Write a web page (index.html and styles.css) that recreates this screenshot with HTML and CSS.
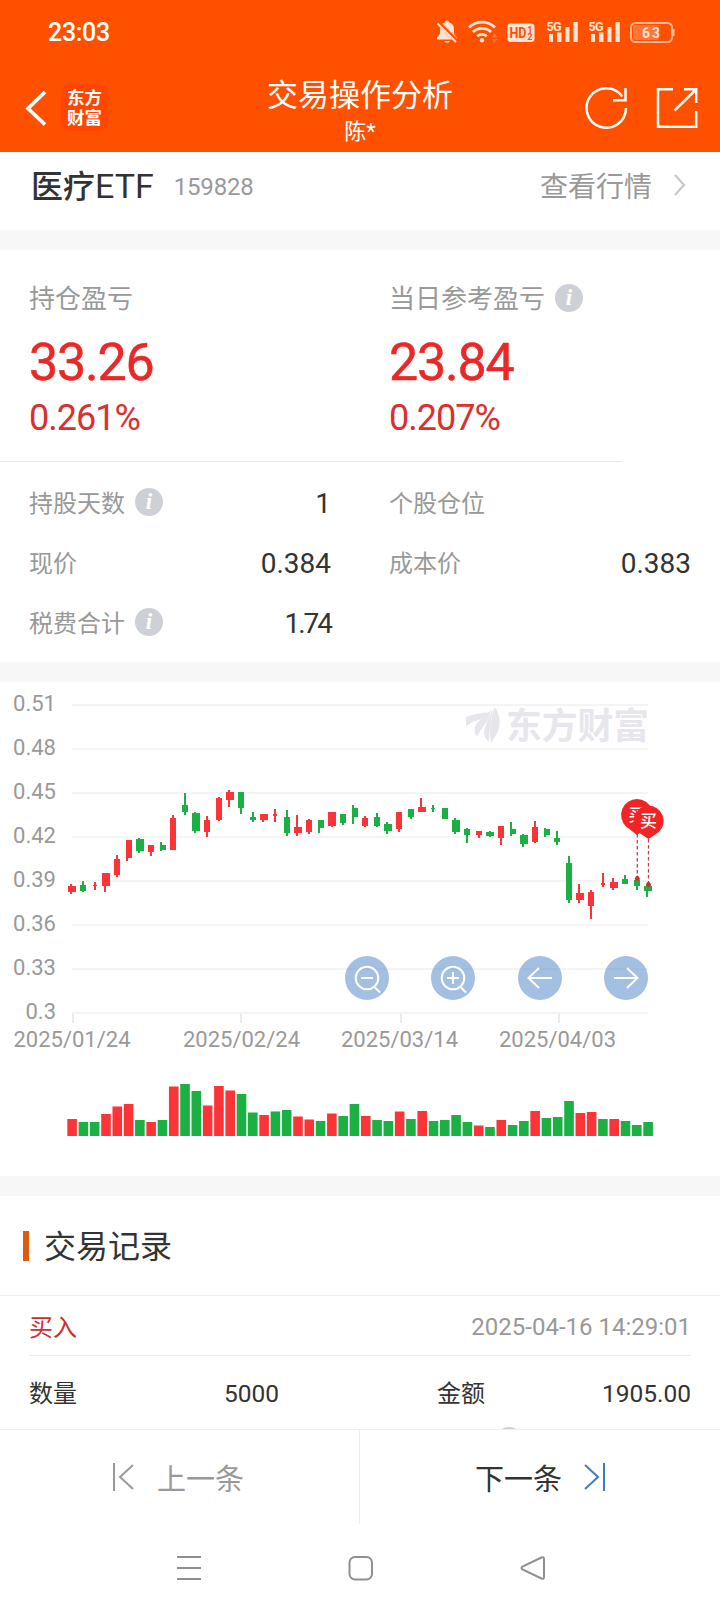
FILE: index.html
```html
<!DOCTYPE html>
<html lang="zh-CN">
    <head>
        <meta charset="UTF-8">
        <meta name="viewport" content="width=device-width, initial-scale=1.0">
        <title>交易操作分析</title>
        <link rel="stylesheet" href="styles.css">
    </head>
    <body>
        <header class="header">
            <div class="status-bar">
                <span class="time">23:03</span>
                <svg class="status-icons" width="244" height="30" viewBox="434 16 244 30" fill="#ffe3d3">
                    <!-- muted bell -->
                    <path d="M447 20.5c1.2 0 1.8.8 1.8 1.7 3.6 1 5.2 3.6 5.2 7v4.6l3 4.2v1.5H437V38l3-4.2v-4.6c0-3.4 1.6-6 5.2-7 0-.9.6-1.7 1.8-1.7zM444 41h6c-.4 2.4-5.6 2.4-6 0z"/>
                    <path d="M438 22.5L457.5 42" stroke="#ff5000" stroke-width="4.5"/>
                    <path d="M437.5 23.5L456 42" stroke="#ffe3d3" stroke-width="2"/>
                    <!-- wifi -->
                    <g fill="none" stroke="#ffe3d3" stroke-width="2.8">
                        <path d="M469 27.5a18.5 18.5 0 0 1 26 0"/>
                        <path d="M473 32a12.8 12.8 0 0 1 18 0"/>
                        <path d="M477.3 36.3a6.8 6.800 0 0 1 9.4 0"/>
                    </g>
                    <circle cx="482" cy="40.2" r="2.2"/>
                    <path d="M491.5 37.5l3-4 3 4zM491.500 39l3 4 3-4z" fill="#ff7434"/>
                    <!-- HD badge -->
                    <rect x="507.5" y="23.5" width="27" height="18.5" rx="3.5"/>
                    <g class="badge-text" fill="#ff5000">
                        <text x="509.5" y="38.2" font-size="15" textLength="17" lengthAdjust="spacingAndGlyphs">HD</text>
                        <text x="527.2" y="32.5" font-size="9">1</text>
                        <text x="527.2" y="40" font-size="9">2</text>
                    </g>
                    <!-- signals -->
                    <g class="badge-text">
                        <text x="546.5" y="30.5" font-size="12.5" textLength="15">5G</text>
                        <text x="588.5" y="30.5" font-size="12.5" textLength="15">5G</text>
                    </g>
                    <path d="M549 34h4v8h-4zM557 32.5h4.5V42H557zM565.5 27h4v15h-4zM573.5 22h4.3v20h-4.3z"/>
                    <path d="M591 34h4v8h-4zM599 32.5h4.5V42H599zM607.5 27h4v15h-4zM615.5 22h4.3v20h-4.3z"/>
                    <!-- battery -->
                    <rect x="631" y="23" width="41" height="19" rx="4.5" fill="none" stroke="#ffb999" stroke-width="2"/>
                    <rect x="633" y="25" width="26" height="15" rx="2" fill="#ff7437"/>
                    <path d="M673.500 29v7" stroke="#ffb999" stroke-width="2"/>
                    <text class="badge-text" x="651" y="37.5" font-size="14" text-anchor="middle" textLength="18">63</text>
                </svg>
            </div>
            <div class="title-bar">
                <div class="title-left">
                    <svg width="24" height="40" viewBox="24 88 24 40" fill="none" stroke="#fff" stroke-width="3.7">
                        <path d="M45 92L28 108.5 45 124.5"/>
                    </svg>
                    <div class="app-logo">东方<br>财富</div>
                </div>
                <div class="title-center">
                    <h1>交易操作分析</h1>
                    <p>陈*</p>
                </div>
                <svg width="116" height="44" viewBox="584 86 116 44" fill="none" stroke="#fff" stroke-width="2.5">
                    <path d="M626 108a19.7 19.7 0 1 1-3.7-11.5"/>
                    <path d="M625.5 88v12.3H613"/>
                    <path d="M673 89.3H658v37.5h38.2V111M684 89.3h12.2V103M674.5 110.5L696 89.5"/>
                </svg>
            </div>
        </header>

        <section class="stock">
            <h2>医疗<span>ETF</span></h2>
            <span class="code">159828</span>
            <a class="quote-link">查看行情</a>
            <svg width="14" height="24" viewBox="0 0 14 24" fill="none" stroke="#c8c8c8" stroke-width="2.2">
                <path d="M2 2l9 10-9 10"/>
            </svg>
        </section>

        <section class="summary">
            <div class="profit">
                <div class="profit-item">
                    <div class="label"><span>持仓盈亏</span></div>
                    <div class="amount">33.26</div>
                    <div class="percent">0.261%</div>
                </div>
                <div class="profit-item">
                    <div class="label"><span>当日参考盈亏</span><i class="info">i</i></div>
                    <div class="amount">23.84</div>
                    <div class="percent">0.207%</div>
                </div>
            </div>
            <div class="details">
                <div class="detail"><span class="name">持股天数</span><i class="info">i</i><b>1</b></div>
                <div class="detail"><span class="name">个股仓位</span></div>
                <div class="detail"><span class="name">现价</span><b>0.384</b></div>
                <div class="detail"><span class="name">成本价</span><b>0.383</b></div>
                <div class="detail"><span class="name">税费合计</span><i class="info">i</i><b class="narrow">1.74</b></div>
            </div>
        </section>

        <section class="chart">
            <svg id="chart" width="720" height="494" viewBox="0 682 720 494">
                <g id="axis"></g>
                <g fill="#e6e6ec">
                    <path d="M466 717c8-3 17-5 24-4.5-4 5-12 8-16 8.5-3 1.5-5 3.5-8 5z"/>
                    <path d="M475 727c3-6 8-10 16-17-2 7-3 10-6 14-3 4-6 8-8 13-2-4-3-7-2-10z"/>
                    <path d="M493 708c-4 10-8 17-9 24 0 5 3 8 5 10 0-12 2-22 4-34z"/>
                    <path d="M494.5 707c6 8 7 18 2 27l-5 9c-3-7-2-20 3-36z"/>
                    <text class="watermark" x="506" y="739" textLength="143" lengthAdjust="spacingAndGlyphs">东方财富</text>
                </g>
                <g id="candles" shape-rendering="crispEdges"></g>
                <g id="volumes"></g>
                <!-- buy markers -->
                <g stroke="#b8474a" stroke-width="1.300" stroke-dasharray="3.5 2.5">
                    <path d="M637.3 834v43M648.5 839v44"/>
                </g>
                <g fill="#d32a2a">
                    <path d="M634.5 879q2.8-7 5.6 0-2.8 4-5.6 0zM645.7 885q2.8-7 5.6 0-2.8 4-5.6 0z"/>
                </g>
                <path d="M637 799a16 16 0 0 1 11 27.5L637 835l-11-8.5A16 16 0 0 1 637 799z" fill="#f02424"/>
                <text class="pin" x="637" y="820.5">买</text>
                <path d="M648.5 805.5a15.5 15.5 0 0 1 10.5 26.5l-10.5 7-10.5-7a15.5 15.5 0 0 1 10.5-26.5z" fill="#f02424"/>
                <text class="pin" x="648.5" y="826.5">买</text>
            </svg>
            <div class="chart-tools">
                <button><svg viewBox="0 0 44 44"><circle cx="22" cy="22" r="11.3"/><path d="M16 22h12M29.500 31l5.500 5.500"/></svg></button>
                <button><svg viewBox="0 0 44 44"><circle cx="22" cy="22" r="11.3"/><path d="M16 22h12M22 16v12M29.500 31l5.500 5.500"/></svg></button>
                <button><svg viewBox="0 0 44 44"><path d="M34 22H10.5M21 12L10.5 22 21 32"/></svg></button>
                <button><svg viewBox="0 0 44 44"><path d="M10 22h23.5M23 12l10.5 10L23 32"/></svg></button>
            </div>
        </section>

        <section class="records">
            <h3><span>交易记录</span></h3>
            <div class="record-head">
                <span class="buy">买入</span>
                <time>2025-04-16 14:29:01</time>
            </div>
            <div class="record-body">
                <span>数量</span>
                <span class="num">5000</span>
                <span>金额</span>
                <span class="num">1905.00</span>
                <i class="info more"></i>
            </div>
        </section>

        <nav class="pager">
            <div class="prev">
                <svg width="22" height="30" viewBox="0 0 22 30" fill="none" stroke="#999" stroke-width="2"><path d="M2 1v28M21 3L8 15l13 12"/></svg>
                <span>上一条</span>
            </div>
            <div class="next">
                <span>下一条</span>
                <svg width="22" height="30" viewBox="0 0 22 30" fill="none" stroke="#3c7ec4" stroke-width="2"><path d="M20 1v28M1 3l13 12L1 27"/></svg>
            </div>
        </nav>

        <div class="system-nav">
            <svg width="26" height="26" viewBox="0 0 26 26"><path d="M1 2h24M1 13h24M1 24h24"/></svg>
            <svg width="26" height="26" viewBox="0 0 26 26"><rect x="1.5" y="2" width="22.5" height="22.5" rx="5.5"/></svg>
            <svg width="26" height="26" viewBox="0 0 26 26"><path d="M21.500 2.5L2.5 11.500q-2 1.500 0 3l19 9q2.500 1 2.500-1.500V4q0-2.500-2.500-1.500z"/></svg>
        </div>

        <script src="script.js"></script>
    </body>
</html>
```

FILE: styles.css
```css
:root {
    --orange: #ff5000;
    --red: #ea2828;
    --dark: #333;
    --gray: #999;
    --line: #ededed;
    --gap: #f7f7f7;
}

* {
    margin: 0;
    padding: 0;
    box-sizing: border-box;
}

body {
    width: 720px;
    height: 1612px;
    overflow: hidden;
    background: #fff;
    color: var(--dark);
    font-family: Roboto, 'Noto Sans CJK SC', sans-serif;
}

svg {
    display: block;
    flex-shrink: 0;
}

/* header */
.header {
    height: 152px;
    background: var(--orange);
    color: #fff;
}

.status-bar {
    display: flex;
    justify-content: space-between;
    height: 64px;
    padding: 16px 42px 0 48px;
}

.time {
    font-size: 25px;
    font-weight: 500;
    line-height: 33px;
    letter-spacing: -0.3px;
}

.badge-text {
    font-family: Roboto, sans-serif;
    font-weight: 700;
}

.title-bar {
    display: grid;
    grid-template-columns: 1fr auto 1fr;
    height: 88px;
    padding: 0 20px 0 24px;
}

.title-bar > svg {
    justify-self: end;
    margin-top: 22px;
}

.title-left {
    display: flex;
    align-items: center;
    gap: 13px;
    height: 88px;
}

.app-logo {
    width: 47px;
    height: 47px;
    margin-top: -1px;
    padding-top: 4px;
    border-radius: 9px;
    background: #ff4500;
    font-size: 17.5px;
    font-weight: 700;
    line-height: 20px;
    text-align: center;
}

.title-center {
    margin-left: -4px;
    text-align: center;
}

.title-center h1 {
    margin-top: 10px;
    font-size: 31px;
    font-weight: 400;
    line-height: 44px;
}

.title-center p {
    font-size: 22px;
    line-height: 27px;
}

/* stock */
.stock {
    display: flex;
    align-items: center;
    height: 98px;
    padding: 0 33px 12px 31px;
    border-bottom: 20px solid var(--gap);
}

.stock h2 {
    margin-top: -2px;
    font-size: 32px;
    font-weight: 500;
}

.stock h2 span {
    font-size: 34px;
    font-weight: 400;
}

.code {
    margin: 4px 0 0 20px;
    color: var(--gray);
    font-size: 24px;
    letter-spacing: -0.2px;
}

.quote-link {
    margin: 0 21px 0 auto;
    color: var(--gray);
    font-size: 28px;
}

/* summary */
.summary {
    height: 432px;
    border-bottom: 20px solid var(--gap);
}

.profit {
    display: grid;
    grid-template-columns: 360px 1fr;
    height: 211px;
    padding: 30px 0 0 29px;
}

.label {
    display: flex;
    align-items: center;
    height: 36px;
    color: var(--gray);
    font-size: 26px;
}

.label span,
.name {
    padding-bottom: 3px;
}

.info {
    display: block;
    width: 28px;
    height: 28px;
    border-radius: 50%;
    background: #cdd0d6;
    color: #fff;
    font: italic 700 23px/27px 'Liberation Serif', serif;
    text-align: center;
}

.label .info {
    margin-left: 10px;
}

.amount {
    height: 58px;
    margin-top: 18px;
    color: var(--red);
    font-size: 52px;
    line-height: 58px;
    letter-spacing: -1.2px;
    -webkit-text-stroke: 0.5px var(--red);
}

.percent {
    margin-top: 4px;
    color: #d93030;
    font-size: 36px;
    line-height: 44px;
    letter-spacing: -1px;
}

.details {
    position: relative;
    display: grid;
    grid-template-columns: 302px 302px;
    grid-auto-rows: 60px;
    column-gap: 58px;
    padding: 12px 0 0 29px;
}

.details::before {
    content: '';
    position: absolute;
    top: 0;
    left: 0;
    width: 622px;
    height: 1px;
    background: #e8e8e8;
}

.detail {
    display: flex;
    align-items: center;
}

.name {
    color: var(--gray);
    font-size: 24px;
}

.detail .info {
    margin: -2px 0 0 10px;
}

.detail b {
    margin-left: auto;
    font-size: 28px;
    font-weight: 400;
}

.detail .narrow {
    letter-spacing: -2px;
}

/* chart */
.chart {
    position: relative;
    height: 514px;
    border-bottom: 20px solid var(--gap);
}

.chart text {
    font-family: Roboto, 'Noto Sans CJK SC', sans-serif;
}

.axis-label {
    fill: var(--gray);
    font-size: 22px;
}

.watermark {
    font-size: 36px;
    font-weight: 700;
}

.pin {
    fill: #fff;
    font-size: 17px;
    font-weight: 500;
    text-anchor: middle;
}

.chart-tools {
    position: absolute;
    top: 274px;
    left: 345px;
    display: flex;
    gap: 42.3px;
}

.chart-tools button {
    width: 44px;
    height: 44px;
    border: none;
    border-radius: 50%;
    background: rgba(72, 130, 200, 0.5);
}

.chart-tools svg {
    width: 44px;
    height: 44px;
    fill: none;
    stroke: #fff;
    stroke-width: 2;
}

/* records */
.records {
    height: 233px;
    overflow: hidden;
}

.records h3 {
    display: flex;
    align-items: center;
    height: 100px;
    padding: 0 0 0 23px;
    border-bottom: 1px solid var(--line);
    font-size: 32px;
    font-weight: 400;
}

.records h3::before {
    content: '';
    width: 6px;
    height: 30px;
    margin-right: 15px;
    background: #e05a0c;
}

.records h3 span {
    padding-bottom: 3px;
}

.record-head {
    display: flex;
    align-items: center;
    justify-content: space-between;
    height: 60px;
    margin: 0 29px;
    padding-top: 3px;
    border-bottom: 1px solid var(--line);
    font-size: 24px;
}

.buy {
    padding-bottom: 4px;
    color: #cc2f2f;
}

.record-head time {
    color: var(--gray);
}

.record-body {
    position: relative;
    display: grid;
    grid-template-columns: 195px 213px 1fr auto;
    align-items: center;
    height: 73px;
    margin: 0 29px;
    font-size: 24px;
}

.record-body span {
    padding-bottom: 2px;
}

.record-body .num {
    padding: 1px 0 0;
    font-size: 24.5px;
}

.more {
    position: absolute;
    top: 71px;
    left: 466px;
}

/* pager */
.pager {
    display: grid;
    grid-template-columns: 1fr 1fr;
    height: 95px;
    border-top: 1px solid var(--line);
    font-size: 29px;
}

.pager div {
    display: flex;
    align-items: center;
    height: 94px;
}

.prev {
    gap: 23px;
    padding-left: 112px;
    border-right: 1px solid var(--line);
    color: var(--gray);
}

.next {
    gap: 22px;
    padding-left: 115px;
}

.system-nav {
    display: flex;
    justify-content: center;
    gap: 146px;
    height: 88px;
    padding: 31px 0 0 2px;
}

.system-nav svg {
    fill: none;
    stroke: #8f8f8f;
    stroke-width: 2;
}
```

FILE: script.js
```js
const RED = '#fd3437';
const GREEN = '#1bb043';

// color, body left, width, top, bottom, wick x, high, low
const candles = [
    ['r', 68, 8, 886, 892.3, 71, 884, 894], ['g', 80, 6, 885, 891, 83, 881, 891.7],
    ['r', 93, 4, 884.7, 886.3, 95, 882.3, 890], ['r', 102, 8, 872.7, 886.3, 105, 872.7, 891.7],
    ['r', 114, 6, 859.3, 874.7, 117, 854.7, 876.7], ['r', 126, 6, 840.3, 858.3, 127, 840.3, 860.7],
    ['g', 136, 8, 839, 851, 139, 838.3, 853], ['r', 148, 6, 844.7, 852.3, 151, 844.7, 855.7],
    ['g', 160, 6, 845, 850, 161, 841.7, 850.7], ['r', 170, 6, 818.3, 849.7, 173, 815, 849.7],
    ['g', 182, 6, 805.3, 811.7, 185, 793, 815], ['g', 192, 8, 812.7, 831, 195, 812, 832.7],
    ['r', 204, 6, 819.7, 832, 207, 816.3, 837], ['r', 216, 6, 797.7, 820, 219, 797, 821],
    ['r', 226, 8, 792, 799.7, 229, 790, 807.3], ['g', 238, 6, 792, 808.3, 241, 792, 814],
    ['g', 250, 6, 817, 819.7, 253, 812, 822.3], ['r', 260, 8, 814, 819.7, 263, 814, 822.3],
    ['r', 273, 4, 814.3, 815.7, 275, 809, 822.3], ['g', 284, 6, 817, 833, 287, 810.3, 835.7],
    ['r', 294, 8, 827.3, 833, 297, 815, 835.7], ['r', 306, 6, 819.7, 832.3, 309, 819, 834],
    ['g', 318, 6, 819.7, 827.7, 319, 819.7, 832.7], ['r', 328, 8, 812.3, 826, 332, 812, 826.7],
    ['g', 340, 6, 814, 823, 343, 814, 825], ['g', 352, 6, 808.3, 817, 353, 804.7, 823.7],
    ['r', 362, 6, 818, 826, 365, 816, 826.7], ['g', 374, 6, 817, 826, 377, 813.3, 826.7],
    ['g', 384, 8, 824, 830.7, 387, 822.3, 834], ['r', 396, 6, 812.3, 829.3, 399, 812.3, 831.7],
    ['g', 408, 6, 809.3, 817, 411, 809.3, 819.3], ['r', 418, 8, 806.7, 811.7, 421, 798.3, 812],
    ['g', 431, 4, 808, 809.3, 433, 804.7, 812], ['g', 442, 6, 808, 819, 445, 808, 819],
    ['g', 452, 8, 819.7, 832, 455, 818, 834], ['g', 464, 6, 829, 835, 467, 828, 843],
    ['r', 476, 6, 831.3, 834.7, 479, 831.3, 838.3], ['g', 486, 8, 831.7, 836.3, 490, 831, 837],
    ['r', 498, 6, 825.7, 838, 501, 825.7, 844.7], ['g', 510, 6, 829, 833.7, 511, 822.3, 835.7],
    ['g', 520, 8, 834.7, 843.7, 523, 834, 847], ['r', 532, 6, 827.3, 842, 535, 820.7, 843],
    ['g', 544, 6, 829, 834.7, 545, 828.3, 837], ['g', 554, 6, 837.7, 842.3, 557, 831, 844.7],
    ['g', 566, 6, 862.7, 899.7, 569, 856, 903.3], ['r', 576, 8, 893.3, 899.7, 579, 884, 903.3],
    ['r', 588, 6, 891.7, 905.7, 591, 890, 919], ['r', 601, 4, 883.3, 884.7, 603, 873.3, 887.3],
    ['r', 610, 8, 881.7, 888, 613, 878.3, 890], ['g', 622, 6, 879.3, 884, 625, 875, 884],
    ['g', 634, 6, 880, 886.3, 637, 878.3, 890], ['g', 644, 8, 885.7, 891, 647, 885, 897.3]
];

const volumes = [
    17, 14, 14, 22, 29.5, 32, 16, 14, 16, 49.5, 52, 45, 30.5, 50, 45.5, 42, 23.5, 21,
    24.5, 26, 19.5, 16.5, 15, 22.5, 20, 32, 20, 16, 15, 24.5, 17, 25, 15, 16, 21, 14,
    10.5, 9, 16, 11, 15, 25, 18, 19, 35, 23, 24, 17, 17, 15, 11, 14
];

let axis = '';
['0.51', '0.48', '0.45', '0.42', '0.39', '0.36', '0.33', '0.3'].forEach((label, i) => {
    const y = 704 + i * 44;
    axis += `<rect x="72" y="${y}" width="576" height="2" fill="#f4f4f5"/>`;
    axis += `<text class="axis-label" x="56" y="${y + 7}" text-anchor="end">${label}</text>`;
});

[['2025/01/24', 73, 72], ['2025/02/24', 241, 241.5], ['2025/03/14', 401, 399.5], ['2025/04/03', 559, 557.5]].forEach(([label, tick, x]) => {
    axis += `<rect x="${tick - 1}" y="1014" width="2" height="9" fill="#ebebed"/>`;
    axis += `<text class="axis-label" x="${x}" y="1047" text-anchor="middle">${label}</text>`;
});
document.getElementById('axis').innerHTML = axis;

document.getElementById('candles').innerHTML = candles.map(([c, x, w, top, bottom, wick, high, low]) => {
    const color = c === 'r' ? RED : GREEN;
    return `<rect x="${x}" y="${top}" width="${w}" height="${bottom - top}" fill="${color}"/>` +
        `<rect x="${wick - 1}" y="${high}" width="2" height="${low - high}" fill="${color}"/>`;
}).join('');

const volumeColors = 'rggrrrgrgrggrrrggrggrrgrggrggrgrggggrgrggrgggrrgrggg';
document.getElementById('volumes').innerHTML = volumes.map((v, i) => {
    const color = volumeColors[i] === 'r' ? RED : GREEN;
    return `<rect x="${67.3 + i * 11.294}" y="${1136 - v}" width="9.6" height="${v}" fill="${color}"/>`;
}).join('');
```
